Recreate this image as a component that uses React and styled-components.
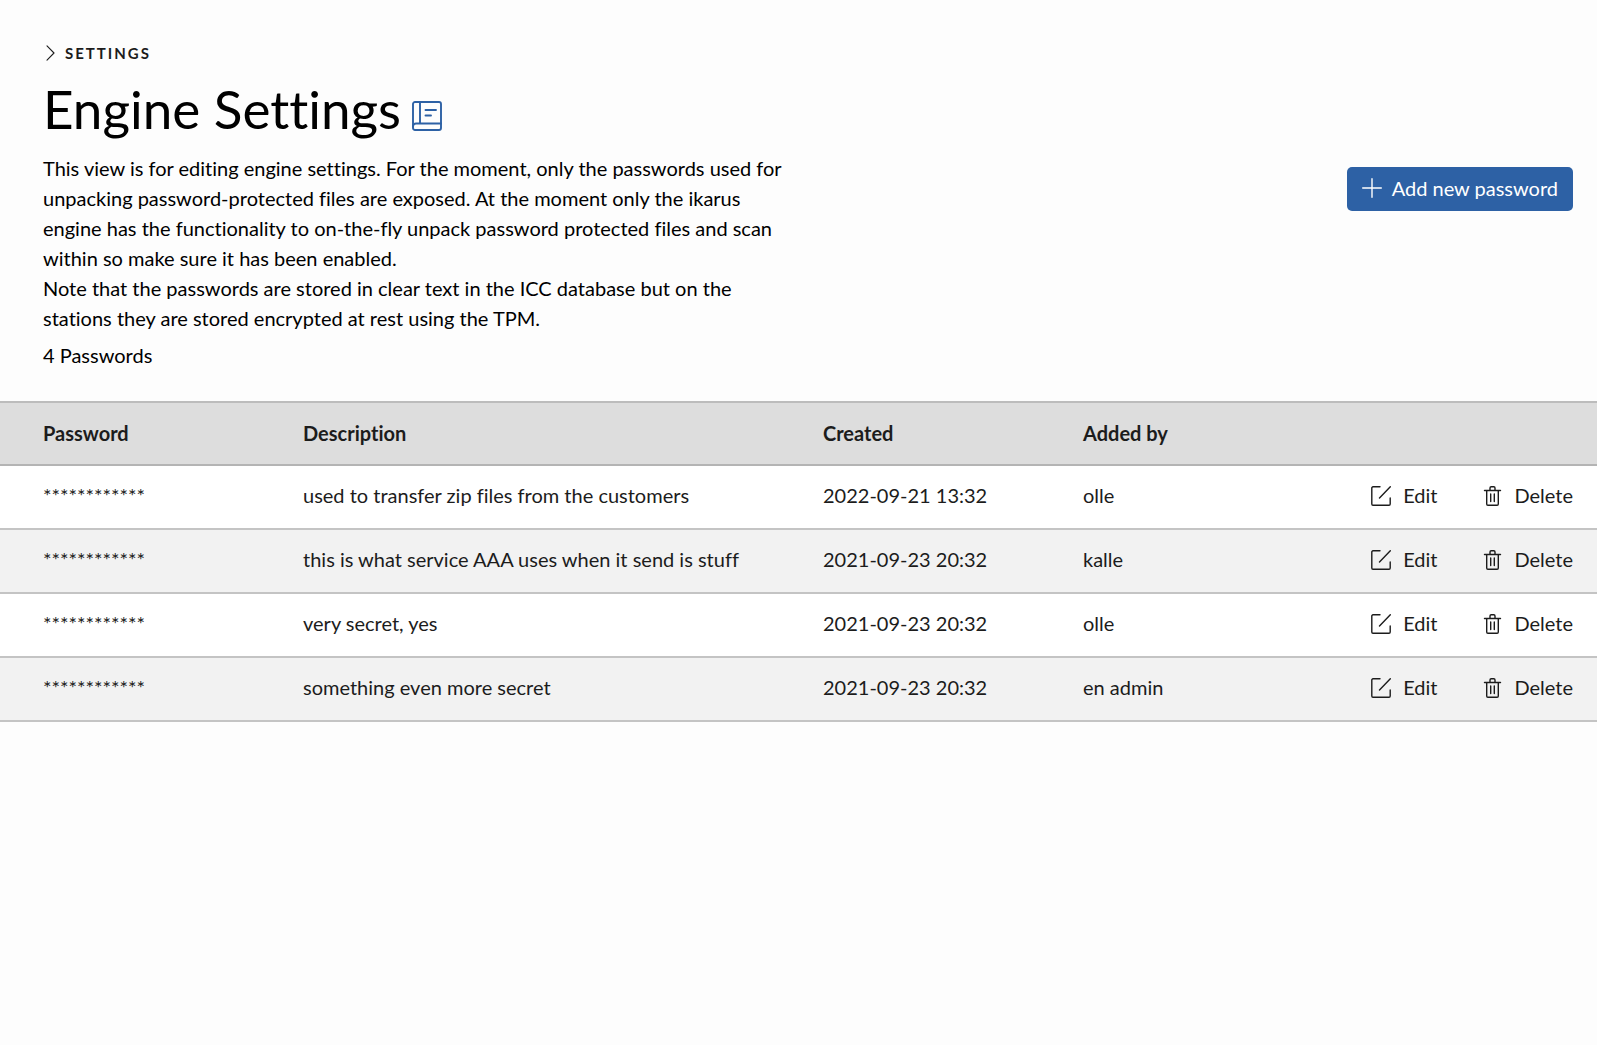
import React from 'react'
import styled, { createGlobalStyle } from 'styled-components'

const GlobalStyle = createGlobalStyle`
    * {
        box-sizing: border-box;
    }

    body {
        margin: 0;
        background-color: #fdfdfd;
        color: #000;
        font-family: Lato, sans-serif;
        font-size: 20px;
        line-height: 30px;
        font-variant-ligatures: none;
    }
`

const Page = styled.main`
    padding-top: 38px;
`

const Header = styled.header`
    display: flex;
    justify-content: space-between;
    align-items: flex-start;
    padding: 0 24px 0 43px;
    margin-bottom: 31px;
`

const Intro = styled.div`
    max-width: 740px;
`

const Breadcrumb = styled.a`
    display: flex;
    align-items: center;
    gap: 8px;
    color: #1c1c1c;
    font-size: 15px;
    font-weight: 700;
    letter-spacing: 2px;
    text-transform: uppercase;
    text-decoration: none;
`

const TitleRow = styled.div`
    display: flex;
    align-items: center;
    gap: 11px;
    margin-bottom: 3px;

    h1 {
        margin: 0;
        font-size: 53px;
        font-weight: 400;
        line-height: 82px;
    }
`

const DocsLink = styled.a`
    display: flex;
    padding-top: 14px;
    color: #2d61a5;
`

const Text = styled.p`
    margin: 0;
`

const Count = styled.p`
    margin: 7px 0 0;
`

const AddButton = styled.button`
    display: flex;
    align-items: center;
    gap: 10px;
    height: 44px;
    margin-top: 129px;
    padding: 0 15px 2px;
    border: none;
    border-radius: 5px;
    background-color: #2d61a5;
    color: #fff;
    font: inherit;
    white-space: nowrap;
    cursor: pointer;
`

const Table = styled.table`
    width: 100%;
    table-layout: fixed;
    border-collapse: separate;
    border-spacing: 0;
    border-top: 2px solid #bcbcbc;
    color: #1c1c1c;
    text-align: left;
`

const Col = styled.col`
    width: ${({ width }) => width};
`

const Row = styled.tr`
    background-color: ${({ $bg }) => $bg};

    th, td {
        height: 64px;
        padding: 0 0 4px;
        border-bottom: 2px solid #c4c4c4;
    }

    th {
        height: 63px;
        padding-bottom: 2px;
        border-color: #b4b4b4;
    }

    th:first-child, td:first-child {
        padding-left: 43px;
    }
`

const Actions = styled.div`
    display: flex;
    justify-content: flex-end;
    gap: 45px;
    padding-right: 24px;
`

const ActionButton = styled.button`
    display: flex;
    align-items: center;
    gap: 12px;
    padding: 0;
    border: none;
    background: none;
    color: inherit;
    font: inherit;
    cursor: pointer;

    svg {
        margin-top: 2px;
    }
`

const Icon = ({ size = 20, width = size, stroke = 1.4, children }) => (
    <svg
        width={width}
        height={size}
        viewBox={`0 0 ${width} ${size}`}
        fill="none"
        stroke="currentColor"
        strokeWidth={stroke}
        strokeLinecap="round"
        strokeLinejoin="round"
        aria-hidden="true"
    >
        {children}
    </svg>
)

const ChevronIcon = () => (
    <Icon size={16} width={14} stroke={1.1}>
        <path d="M4 0.8 L11 8 L4 15.2" />
    </Icon>
)

const BookIcon = () => (
    <Icon size={30} stroke={1.9}>
        <rect x="1" y="1" width="28" height="28" rx="2" />
        <path d="M8 1V22.5M29 22.5H4A3 3 0 0 0 1 25.5M13.5 9H24M13.5 14.5H19" />
    </Icon>
)

const PlusIcon = () => (
    <Icon>
        <path d="M10 0.7V19.3M0.7 10H19.3" />
    </Icon>
)

const EditIcon = () => (
    <Icon>
        <path d="M9 0.8H2A1.2 1.2 0 0 0 0.8 2V18A1.2 1.2 0 0 0 2 19.2H18A1.2 1.2 0 0 0 19.2 18V12M19.3 0.8L8.5 12" />
    </Icon>
)

const TrashIcon = () => (
    <Icon>
        <path d="M2.5 4.5H18.5M4.7 4.5V18A1.2 1.2 0 0 0 5.9 19.2H15.1A1.2 1.2 0 0 0 16.3 18V4.5M8 4.5V2A1.2 1.2 0 0 1 9.2 0.8H11.8A1.2 1.2 0 0 1 13 2V4.5M8.7 8V15.5M12.3 8V15.5" />
    </Icon>
)

const passwords = [
    { description: 'used to transfer zip files from the customers', created: '2022-09-21 13:32', addedBy: 'olle' },
    { description: 'this is what service AAA uses when it send is stuff', created: '2021-09-23 20:32', addedBy: 'kalle' },
    { description: 'very secret, yes', created: '2021-09-23 20:32', addedBy: 'olle' },
    { description: 'something even more secret', created: '2021-09-23 20:32', addedBy: 'en admin' },
]

const PasswordRow = ({ description, created, addedBy, bg }) => (
    <Row $bg={bg}>
        <td>************</td>
        <td>{description}</td>
        <td>{created}</td>
        <td>{addedBy}</td>
        <td>
            <Actions>
                <ActionButton type="button"><EditIcon />Edit</ActionButton>
                <ActionButton type="button"><TrashIcon />Delete</ActionButton>
            </Actions>
        </td>
    </Row>
)

const App = () => {
    return (
        <Page>
            <GlobalStyle />

            <Header>
                <Intro>
                    <Breadcrumb href="#settings"><ChevronIcon />Settings</Breadcrumb>
                    <TitleRow>
                        <h1>Engine Settings</h1>
                        <DocsLink href="#docs" aria-label="Documentation"><BookIcon /></DocsLink>
                    </TitleRow>
                    <Text>
                        This view is for editing engine settings. For the moment, only the passwords used for
                        unpacking password-protected files are exposed. At the moment only the ikarus
                        engine has the functionality to on-the-fly unpack password protected files and scan
                        within so make sure it has been enabled.
                    </Text>
                    <Text>
                        Note that the passwords are stored in clear text in the ICC database but on the
                        stations they are stored encrypted at rest using the TPM.
                    </Text>
                    <Count>{passwords.length} Passwords</Count>
                </Intro>
                <AddButton type="button"><PlusIcon />Add new password</AddButton>
            </Header>

            <Table>
                <colgroup>
                    <Col width="303px" />
                    <Col />
                    <Col width="260px" />
                    <Col width="260px" />
                    <Col width="254px" />
                </colgroup>
                <thead>
                    <Row $bg="#ddd">
                        <th scope="col">Password</th>
                        <th scope="col">Description</th>
                        <th scope="col">Created</th>
                        <th scope="col">Added by</th>
                        <th aria-label="Actions" />
                    </Row>
                </thead>
                <tbody>
                    {passwords.map((item, i) => (
                        <PasswordRow key={i} bg={i % 2 ? '#f2f2f2' : '#fff'} {...item} />
                    ))}
                </tbody>
            </Table>
        </Page>
    )
}

export default App
